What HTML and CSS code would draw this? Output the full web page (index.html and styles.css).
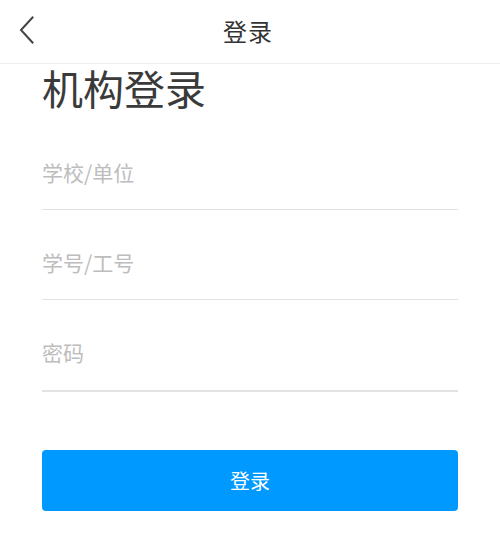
FILE: index.html
```html
<!DOCTYPE html>
<html lang="zh-CN">
<head>
<meta charset="utf-8">
<title>登录</title>
<link rel="stylesheet" href="styles.css">
</head>
<body>
<header class="navbar">
  <button class="back" aria-label="返回">
    <svg width="16" height="28" viewBox="0 0 16 28"><path d="M13.5 1.5 L2 14 L13.5 26.5" fill="none" stroke="#444" stroke-width="2" stroke-linecap="square"/></svg>
  </button>
  <div class="nav-title">登录</div>
  <div></div>
</header>
<main class="content">
  <h1 class="page-title">机构登录</h1>
  <form class="form">
    <input class="field" type="text" placeholder="学校/单位">
    <input class="field" type="text" placeholder="学号/工号">
    <input class="field last" type="password" placeholder="密码">
    <button class="submit" type="button">登录</button>
  </form>
</main>
</body>
</html>
```
FILE: styles.css
```css
html, body {
  margin: 0;
  padding: 0;
  background: #fff;
}
body {
  font-family: "Noto Sans CJK SC", "Noto Sans", sans-serif;
  color: #333;
}
.navbar {
  height: 63px;
  border-bottom: 1px solid #eeeeee;
  display: grid;
  grid-template-columns: 1fr auto 1fr;
  align-items: center;
}
.back {
  justify-self: start;
  margin-left: 19px;
  margin-top: -4px;
  padding: 0;
  border: 0;
  background: none;
  display: flex;
  align-items: center;
}
.nav-title {
  font-size: 24px;
  letter-spacing: 1px;
  color: #333;
  line-height: 1;
  margin-top: -2px;
  margin-left: -4px;
}
.content {
  padding: 0 42px;
}
.page-title {
  margin: 3px 0 0 0;
  font-size: 41px;
  line-height: 40px;
  font-weight: normal;
  color: #3a3a3a;
}
.form {
  display: flex;
  flex-direction: column;
  gap: 18px;
  margin-top: 31px;
}
.field {
  display: block;
  width: 100%;
  box-sizing: border-box;
  height: 72px;
  border: 0;
  border-bottom: 1px solid #e3e3e3;
  padding: 0 0 4px 0;
  font-family: inherit;
  font-size: 21px;
  color: #333;
  outline: none;
  background: transparent;
}
.field.last {
  height: 74px;
  border-bottom: 2px solid #e3e3e3;
}
.field::placeholder {
  color: #bdbdbd;
}
.submit {
  margin-top: 40px;
  height: 61px;
  border: 0;
  border-radius: 4px;
  background: #0099ff;
  color: #fff;
  font-family: inherit;
  font-size: 20px;
}
```
